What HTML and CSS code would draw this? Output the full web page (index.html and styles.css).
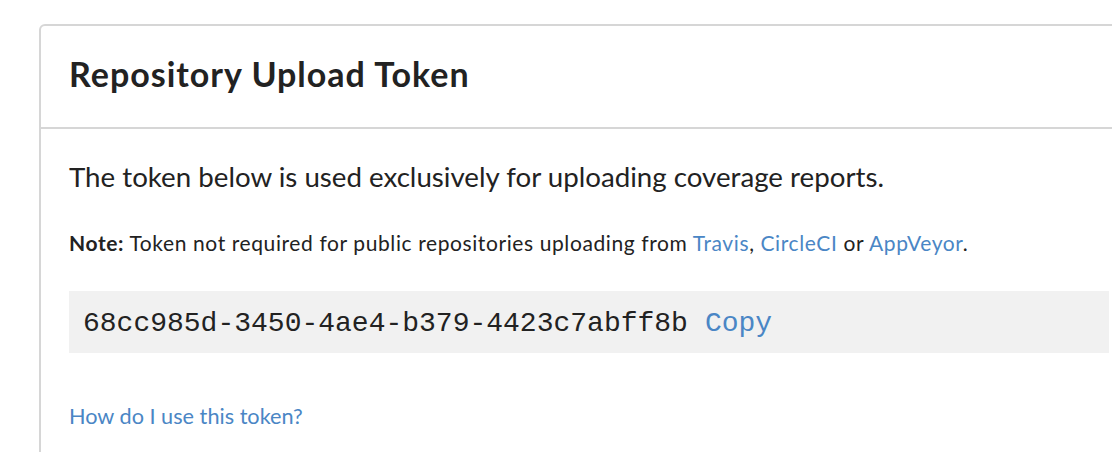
FILE: index.html
```html
<!DOCTYPE html>
<html>
<head>
<meta charset="utf-8">
<link rel="stylesheet" href="styles.css">
</head>
<body>
<div class="card">
  <div class="card-header">
    <h2 class="title">Repository Upload Token</h2>
  </div>
  <div class="card-body">
    <p class="lead">The token below is used exclusively for uploading coverage reports.</p>
    <p class="note"><strong>Note:</strong> Token not required for public repositories uploading from <a href="#">Travis</a>, <a href="#">CircleCI</a> or <a href="#">AppVeyor</a>.</p>
    <div class="token"><span class="token-value">68cc985d-3450-4ae4-b379-4423c7abff8b</span><a href="#" class="copy">Copy</a></div>
    <p class="help-row"><a href="#" class="help">How do I use this token?</a></p>
  </div>
</div>
</body>
</html>
```
FILE: styles.css
```css
html, body {
  margin: 0;
  padding: 0;
  background: #fff;
}
body {
  font-family: Lato, "Open Sans", sans-serif;
  color: #222;
  overflow: hidden;
  height: 452px;
}
a {
  color: #4a86c5;
  text-decoration: none;
}
.card {
  margin: 24px 0 0 39px;
  width: 1100px;
  height: 440px;
  border: 2px solid #d6d6d6;
  border-radius: 6px;
  box-sizing: border-box;
}
.card-header {
  height: 103px;
  border-bottom: 2px solid #d6d6d6;
  box-sizing: border-box;
  padding: 31px 28px 0;
}
.title {
  margin: 0;
  font-size: 34px;
  font-weight: 700;
  line-height: 33px;
  letter-spacing: 1px;
}
.card-body {
  padding: 31px 28px 0;
}
.lead {
  margin: 0;
  font-size: 27.7px;
  line-height: 34px;
}
.note {
  margin: 36px 0 0;
  font-size: 21px;
  line-height: 26px;
  letter-spacing: 0.6px;
}
.token {
  margin-top: 35px;
  background: #f1f1f1;
  height: 62px;
  box-sizing: border-box;
  display: flex;
  align-items: center;
  padding: 3px 0 0 14px;
  font-family: "Liberation Mono", "Courier New", monospace;
  font-size: 28px;
  white-space: pre;
}
.copy {
  margin-left: 17px;
}
.help-row {
  margin: 50px 0 0;
  font-size: 21.7px;
  line-height: 26px;
}
```
